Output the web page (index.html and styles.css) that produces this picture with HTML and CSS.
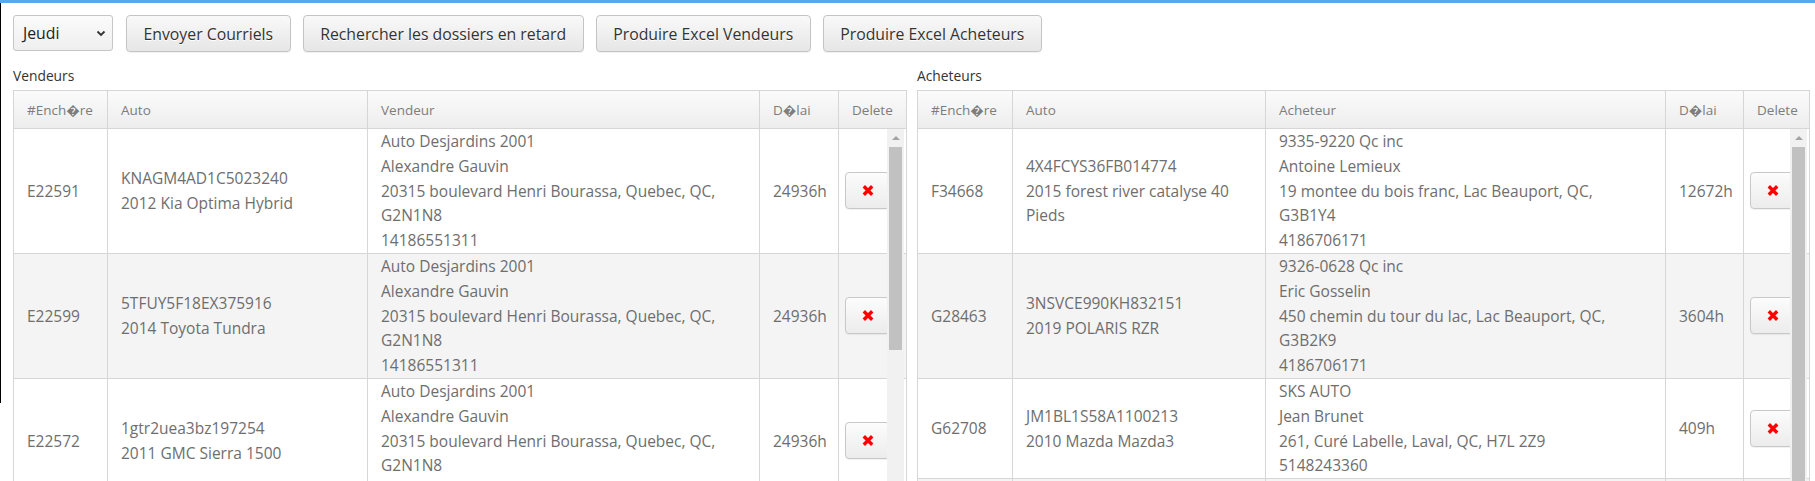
FILE: index.html
```html
<!DOCTYPE html>
<html lang="fr">
<head>
<meta charset="utf-8">
<title>Enchères</title>
<link rel="stylesheet" href="styles.css">
</head>
<body>
<div class="topbar"></div>
<div class="page">
  <div class="toolbar">
    <div class="select"><span>Jeudi</span><svg class="chev" width="10" height="7" viewBox="0 0 10 7"><path d="M1.5 1.5 L5 5 L8.5 1.5" fill="none" stroke="#333" stroke-width="1.8"/></svg></div>
    <button class="btn">Envoyer Courriels</button>
    <button class="btn">Rechercher les dossiers en retard</button>
    <button class="btn">Produire Excel Vendeurs</button>
    <button class="btn">Produire Excel Acheteurs</button>
  </div>
  <div class="panels">
    <section class="panel left">
      <div class="label">Vendeurs</div>
      <table class="grid head">
        <colgroup><col class="l1"><col class="l2"><col class="l3"><col class="l4"><col class="l5"></colgroup>
        <thead><tr><th>#Ench�re</th><th>Auto</th><th>Vendeur</th><th>D�lai</th><th>Delete</th></tr></thead>
      </table>
      <div class="scrollbody">
        <table class="grid body">
          <colgroup><col class="l1"><col class="l2"><col class="l3"><col class="l4"><col class="l5"></colgroup>
          <tbody>
            <tr><td>E22591</td><td>KNAGM4AD1C5023240<br>2012 Kia Optima Hybrid</td><td>Auto Desjardins 2001<br>Alexandre Gauvin<br>20315 boulevard Henri Bourassa, Quebec, QC,<br>G2N1N8<br>14186551311</td><td>24936h</td><td class="del"><button class="xbtn"><svg width="12" height="11" viewBox="0 0 12 11"><path d="M1.8 1.3 L10.2 9.7 M10.2 1.3 L1.8 9.7" stroke="#f00" stroke-width="3.4"/></svg></button></td></tr>
            <tr><td>E22599</td><td>5TFUY5F18EX375916<br>2014 Toyota Tundra</td><td>Auto Desjardins 2001<br>Alexandre Gauvin<br>20315 boulevard Henri Bourassa, Quebec, QC,<br>G2N1N8<br>14186551311</td><td>24936h</td><td class="del"><button class="xbtn"><svg width="12" height="11" viewBox="0 0 12 11"><path d="M1.8 1.3 L10.2 9.7 M10.2 1.3 L1.8 9.7" stroke="#f00" stroke-width="3.4"/></svg></button></td></tr>
            <tr><td>E22572</td><td>1gtr2uea3bz197254<br>2011 GMC Sierra 1500</td><td>Auto Desjardins 2001<br>Alexandre Gauvin<br>20315 boulevard Henri Bourassa, Quebec, QC,<br>G2N1N8<br>14186551311</td><td>24936h</td><td class="del"><button class="xbtn"><svg width="12" height="11" viewBox="0 0 12 11"><path d="M1.8 1.3 L10.2 9.7 M10.2 1.3 L1.8 9.7" stroke="#f00" stroke-width="3.4"/></svg></button></td></tr>
          </tbody>
        </table>
        <div class="vscroll short"><div class="arrow"></div><div class="thumb"></div></div>
      </div>
    </section>
    <section class="panel right">
      <div class="label">Acheteurs</div>
      <table class="grid head">
        <colgroup><col class="r1"><col class="r2"><col class="r3"><col class="r4"><col class="r5"></colgroup>
        <thead><tr><th>#Ench�re</th><th>Auto</th><th>Acheteur</th><th>D�lai</th><th>Delete</th></tr></thead>
      </table>
      <div class="scrollbody">
        <table class="grid body">
          <colgroup><col class="r1"><col class="r2"><col class="r3"><col class="r4"><col class="r5"></colgroup>
          <tbody>
            <tr><td>F34668</td><td>4X4FCYS36FB014774<br>2015 forest river catalyse 40<br>Pieds</td><td>9335-9220 Qc inc<br>Antoine Lemieux<br>19 montee du bois franc, Lac Beauport, QC,<br>G3B1Y4<br>4186706171</td><td>12672h</td><td class="del"><button class="xbtn"><svg width="12" height="11" viewBox="0 0 12 11"><path d="M1.8 1.3 L10.2 9.7 M10.2 1.3 L1.8 9.7" stroke="#f00" stroke-width="3.4"/></svg></button></td></tr>
            <tr><td>G28463</td><td>3NSVCE990KH832151<br>2019 POLARIS RZR</td><td>9326-0628 Qc inc<br>Eric Gosselin<br>450 chemin du tour du lac, Lac Beauport, QC,<br>G3B2K9<br>4186706171</td><td>3604h</td><td class="del"><button class="xbtn"><svg width="12" height="11" viewBox="0 0 12 11"><path d="M1.8 1.3 L10.2 9.7 M10.2 1.3 L1.8 9.7" stroke="#f00" stroke-width="3.4"/></svg></button></td></tr>
            <tr><td>G62708</td><td>JM1BL1S58A1100213<br>2010 Mazda Mazda3</td><td>SKS AUTO<br>Jean Brunet<br>261, Curé Labelle, Laval, QC, H7L 2Z9<br>5148243360</td><td>409h</td><td class="del"><button class="xbtn"><svg width="12" height="11" viewBox="0 0 12 11"><path d="M1.8 1.3 L10.2 9.7 M10.2 1.3 L1.8 9.7" stroke="#f00" stroke-width="3.4"/></svg></button></td></tr>
            <tr class="filler"><td></td><td></td><td></td><td></td><td></td></tr>
          </tbody>
        </table>
        <div class="vscroll long"><div class="arrow"></div><div class="thumb"></div></div>
      </div>
    </section>
  </div>
</div>
</body>
</html>
```
FILE: styles.css
```css
html, body {
  margin: 0;
  padding: 0;
  height: 100%;
  overflow: hidden;
  background: #fff;
}
body {
  font-family: "Open Sans", "DejaVu Sans", sans-serif;
  color: #333;
  position: relative;
}
body::before {
  content: "";
  position: absolute;
  left: 0;
  top: 3px;
  width: 1px;
  height: 400px;
  background: #000;
  z-index: 5;
}
.topbar {
  height: 3px;
  background: #5ba6f0;
}
.page {
  height: calc(100% - 3px);
  display: flex;
  flex-direction: column;
}
.toolbar {
  display: flex;
  align-items: flex-start;
  gap: 12px;
  margin: 12px 0 0 13px;
}
.select {
  box-sizing: border-box;
  width: 100px;
  height: 36px;
  margin-right: 1px;
  border: 1px solid #c6c6c6;
  border-radius: 3px;
  background: linear-gradient(#fbfbfb, #efefef);
  display: flex;
  align-items: center;
  justify-content: space-between;
  padding: 0 6px 0 9px;
  font-size: 15.8px;
  color: #222;
}
.chev {
  display: block;
}
.btn {
  box-sizing: border-box;
  height: 37px;
  padding: 0 16.5px;
  border: 1px solid #c4c4c4;
  border-radius: 4px;
  background: linear-gradient(#f9f9f9, #e6e6e6);
  box-shadow: 0 1px 1px rgba(0,0,0,0.06);
  font-family: "Open Sans", "DejaVu Sans", sans-serif;
  font-size: 15.8px;
  color: #333;
  text-shadow: 0 1px 0 #fff;
  white-space: nowrap;
}
.panels {
  flex: 1;
  min-height: 0;
  display: grid;
  grid-template-columns: 894px 893px;
  column-gap: 10px;
  padding-left: 13px;
}
.panel {
  display: flex;
  flex-direction: column;
  min-height: 0;
}
.label {
  margin-top: 12px;
  margin-bottom: 2px;
  line-height: 24px;
  font-size: 13.8px;
  color: #333;
}
.grid {
  table-layout: fixed;
  border-collapse: separate;
  border-spacing: 0;
  width: 100%;
}
.l1 { width: 95px; }
.l2 { width: 260px; }
.l3 { width: 392px; }
.l4 { width: 79px; }
.l5 { width: 68px; }
.r1 { width: 96px; }
.r2 { width: 253px; }
.r3 { width: 400px; }
.r4 { width: 78px; }
.r5 { width: 66px; }
.grid th, .grid td {
  box-sizing: border-box;
  border-right: 1px solid #d6d6d6;
  border-bottom: 1px solid #d6d6d6;
  text-align: left;
  vertical-align: middle;
  padding: 0 13px;
}
.grid th:first-child, .grid td:first-child {
  border-left: 1px solid #d6d6d6;
}
.head th {
  border-top: 1px solid #d6d6d6;
  height: 39px;
  font-weight: normal;
  font-size: 13.5px;
  color: #7d7d7d;
  background: linear-gradient(#fbfbfb, #ededed);
}
.scrollbody {
  flex: 1;
  min-height: 0;
  overflow: hidden;
  position: relative;
}
.body td {
  font-size: 15.5px;
  line-height: 24.8px;
  color: #6e6e6e;
}
.body tr:nth-child(even) td {
  background: #f4f4f4;
}
.body tr.filler td {
  height: 100px;
}
.body td.del {
  padding: 0 0 0 6px;
}
.xbtn {
  box-sizing: border-box;
  width: 45px;
  height: 37px;
  border: 1px solid #c8c8c8;
  border-radius: 4px;
  background: linear-gradient(#fcfcfc, #ececec);
  box-shadow: 0 1px 1px rgba(0,0,0,0.06);
  display: flex;
  align-items: center;
  justify-content: center;
  padding: 0;
}
.xbtn svg {
  display: block;
}
.vscroll {
  position: absolute;
  top: 0;
  bottom: 0;
  right: 3px;
  width: 17px;
  background: #f1f1f1;
}
.arrow {
  width: 0;
  height: 0;
  margin: 7px auto 0;
  border-left: 4px solid transparent;
  border-right: 4px solid transparent;
  border-bottom: 4px solid #a3a3a3;
}
.thumb {
  position: absolute;
  left: 2px;
  right: 2px;
  top: 18px;
  background: #c1c1c1;
}
.short .thumb {
  height: 203px;
}
.long .thumb {
  bottom: -20px;
}
```
